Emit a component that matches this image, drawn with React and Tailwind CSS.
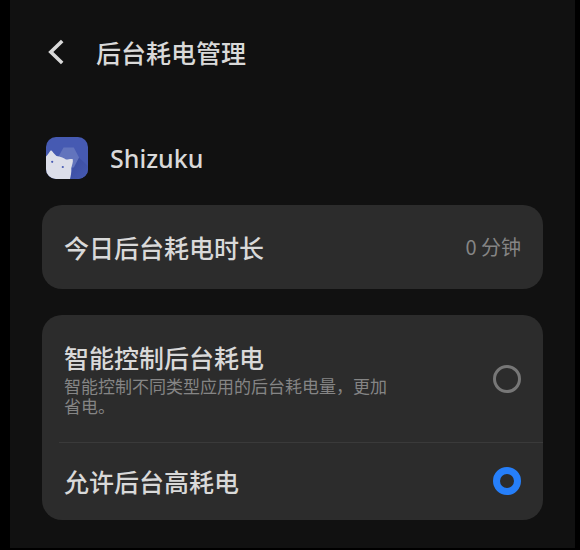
import React, { useState } from "react";

const OPTIONS = [
  {
    id: "smart",
    title: "智能控制后台耗电",
    desc: "智能控制不同类型应用的后台耗电量，更加省电。",
  },
  { id: "allow", title: "允许后台高耗电" },
];

function BackIcon() {
  return (
    <svg className="h-7 w-5" viewBox="0 0 20 28" fill="none" stroke="currentColor" strokeWidth="3.6">
      <path d="M16.2 3L4.8 14L16.2 25" />
    </svg>
  );
}

function AppIcon() {
  return (
    <svg className="h-[42px] w-[42px] rounded-[10px]" viewBox="0 0 42 42">
      <defs>
        <linearGradient id="shade" x1="0" y1="0" x2="1" y2="1">
          <stop offset="0" stopColor="#3a4c9f" />
          <stop offset="1" stopColor="#465ab2" />
        </linearGradient>
      </defs>
      <rect width="42" height="42" fill="#465ab2" />
      {/* shadow of the cat and the hexagon */}
      <path d="M27 30L33 20.5L42 29V42H24Z" fill="url(#shade)" />
      <path d="M17.5 10.5H27.8L33 20.5L27.8 30.5H17.5L12 20.5Z" fill="#6274bd" />
      <path
        d="M0 19.5C2 18 3.5 14.5 5 13.2C6.5 14 8.5 17.5 10.5 19C14 19.2 17.5 20.8 20 22.6C22 22.8 24.5 21.6 26.8 22.2C27.3 25 26 28 25.3 31C25.5 35 24.8 39 24 42H0Z"
        fill="#dcdee9"
      />
      <circle cx="6.2" cy="24.8" r="1.1" fill="#465ab2" />
      <circle cx="16.8" cy="30" r="1.1" fill="#465ab2" />
    </svg>
  );
}

function OptionRow({ option, checked, onSelect }) {
  return (
    <label
      htmlFor={option.id}
      className={`flex items-center justify-between px-[22px] ${option.desc ? "pt-[27px] pb-[26px]" : "pt-[23px] pb-6"}`}
    >
      <span className="max-w-[330px]">
        <span className="block text-[25px] leading-[30px] font-medium text-[#d9d9d9]">{option.title}</span>
        {option.desc && (
          <span className="mt-1 block text-[17px] leading-5 text-[#858585]">{option.desc}</span>
        )}
      </span>
      <input
        type="radio"
        id={option.id}
        name="power"
        checked={checked}
        onChange={() => onSelect(option.id)}
        className="h-7 w-7 shrink-0 appearance-none rounded-full border-3 border-[#777777] checked:border-[7px] checked:border-[#267ffa]"
      />
    </label>
  );
}

function App() {
  const [selected, setSelected] = useState("allow");

  return (
    <div className="flex min-h-screen bg-black pr-[5px] pb-0.5 pl-[10px] font-['Noto_Sans_CJK_SC',sans-serif]">
      <main className="flex-1 bg-[#111111] px-8">
        {/* header */}
        <header className="flex h-[104px] items-center gap-[30px] pl-1 text-[#d9d9d9]">
          <button type="button" aria-label="返回">
            <BackIcon />
          </button>
          <h1 className="text-[25px] leading-[30px] font-medium">后台耗电管理</h1>
        </header>

        {/* app info */}
        <div className="mt-[33px] flex items-center gap-[22px] pl-1">
          <AppIcon />
          <span className="font-['Noto_Sans',sans-serif] text-[25px] leading-[30px] font-medium text-[#d9d9d9]">Shizuku</span>
        </div>

        {/* usage today */}
        <section className="mt-[26px] flex items-center justify-between rounded-[20px] bg-[#2c2c2c] px-[22px] py-[27px]">
          <span className="text-[25px] leading-[30px] font-medium text-[#d9d9d9]">今日后台耗电时长</span>
          <span className="text-[20px] leading-[30px] text-[#858585]">0 分钟</span>
        </section>

        {/* options */}
        <section className="mt-[26px] rounded-[20px] bg-[#2c2c2c]">
          {OPTIONS.map((option, index) => (
            <React.Fragment key={option.id}>
              {index > 0 && <hr className="ml-[17px] border-[#3a3a3a]" />}
              <OptionRow option={option} checked={selected === option.id} onSelect={setSelected} />
            </React.Fragment>
          ))}
        </section>
      </main>
    </div>
  );
}

export default App;
